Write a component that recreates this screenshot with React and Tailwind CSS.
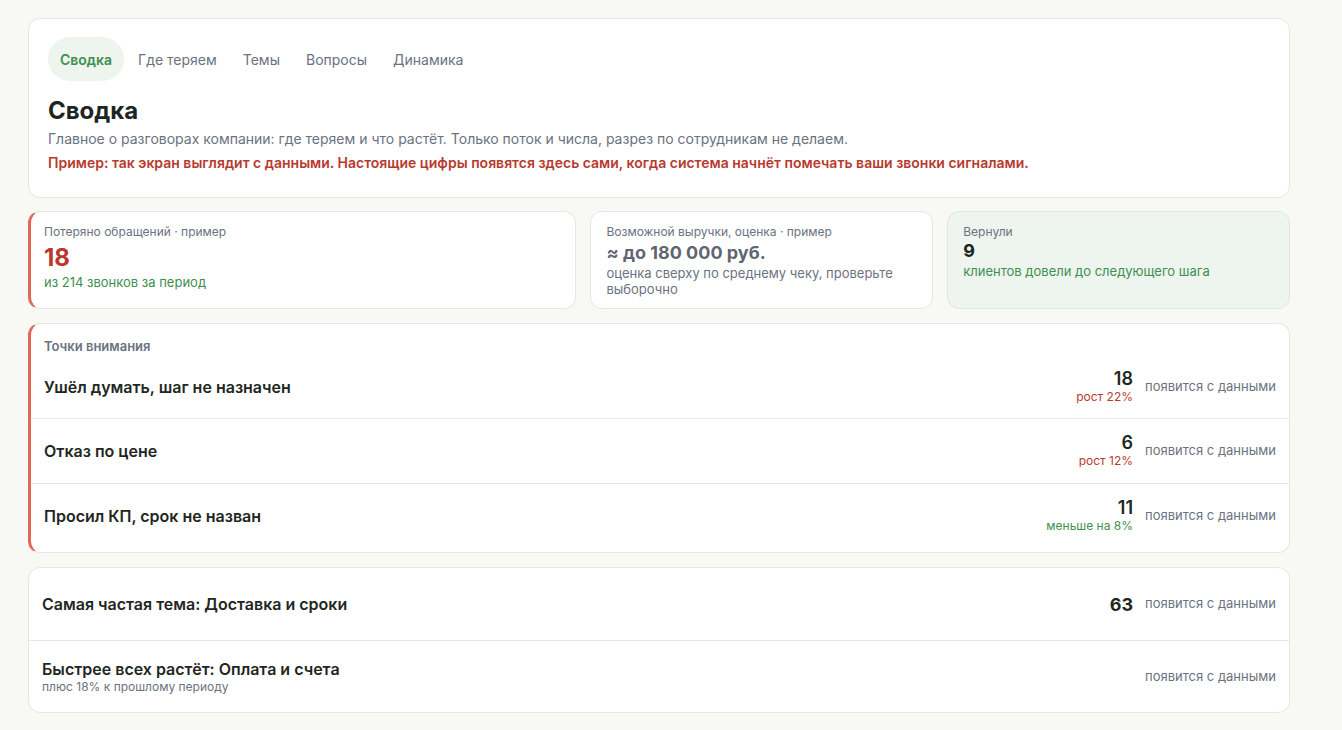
const tabs = ["Сводка", "Где теряем", "Темы", "Вопросы", "Динамика"];

const attention = [
  { title: "Ушёл думать, шаг не назначен", count: 18, delta: "рост 22%", up: true },
  { title: "Отказ по цене", count: 6, delta: "рост 12%", up: true },
  { title: "Просил КП, срок не назван", count: 11, delta: "меньше на 8%", up: false },
];

function Pending() {
  return <span className="text-[13px] text-[#6b7280] whitespace-nowrap">появится с данными</span>;
}

export default function App() {
  return (
    <div
      className="min-h-screen bg-[#f8f8f5] pt-[18px] pb-5 pl-7 text-[#1f2723]"
      style={{ fontFamily: "Inter, 'Noto Sans', sans-serif" }}
    >
      <div className="w-[1262px] flex flex-col gap-3.5">
        {/* Header card */}
        <div className="rounded-xl border border-[#e6e7e3] bg-white pl-[19px] pr-5 pt-[18px] pb-[24px]">
          <nav className="flex items-center gap-0.5">
            {tabs.map((t, i) => (
              <button
                key={t}
                type="button"
                className={
                  i === 0
                    ? "px-3 h-11 rounded-full bg-[#edf5ee] text-[14px] font-semibold text-[#3f8f4f]"
                    : "px-3 h-11 rounded-full text-[14px] text-[#6b7280]"
                }
              >
                {t}
              </button>
            ))}
          </nav>
          <h1 className="mt-3.5 text-[24px] leading-8 font-bold text-[#1c2520]">Сводка</h1>
          <p className="mt-0.5 text-[14px] leading-5 text-[#6b7280]">
            Главное о разговорах компании: где теряем и что растёт. Только поток и числа, разрез по сотрудникам не делаем.
          </p>
          <p className="mt-1 text-[14px] leading-5 font-semibold text-[#b83a2e]">
            Пример: так экран выглядит с данными. Настоящие цифры появятся здесь сами, когда система начнёт помечать ваши звонки сигналами.
          </p>
        </div>

        {/* Stat cards */}
        <div className="-mt-px grid grid-cols-[1.6fr_1fr_1fr] gap-3.5">
          <div className="rounded-xl border border-[#e6e7e3] border-l-[3px] border-l-[#e4665a] bg-white pl-[13px] pr-4 pt-3 pb-[11px]">
            <div className="text-[12px] leading-4 text-[#6b7280]">Потеряно обращений · пример</div>
            <div className="mt-1 text-[24px] leading-7 font-bold text-[#b83a2e]">18</div>
            <div className="mt-px text-[13px] leading-[18px] text-[#3f8f4f]">из 214 звонков за период</div>
          </div>
          <div className="rounded-xl border border-[#e6e7e3] bg-white px-[15px] pt-3 pb-[11px]">
            <div className="text-[12px] leading-4 text-[#6b7280]">Возможной выручки, оценка · пример</div>
            <div className="mt-0.5 text-[18px] leading-[22px] font-bold text-[#5f6672]">≈ до 180 000 руб.</div>
            <div className="mt-px text-[13px] leading-4 text-[#6b7280]">
              оценка сверху по среднему чеку, проверьте выборочно
            </div>
          </div>
          <div className="rounded-xl border border-[#dfe9e0] bg-[#edf5ee] px-[15px] pt-3 pb-[11px]">
            <div className="text-[12px] leading-4 text-[#6b7280]">Вернули</div>
            <div className="text-[18px] leading-[22px] font-bold text-[#1c2520]">9</div>
            <div className="text-[13px] leading-[18px] text-[#3f8f4f]">клиентов довели до следующего шага</div>
          </div>
        </div>

        {/* Attention points */}
        <div className="rounded-xl border border-[#e6e7e3] border-l-[3px] border-l-[#e4665a] bg-white pb-1">
          <div className="pl-[13px] pr-4 pt-[13px] text-[13px] leading-[18px] font-semibold text-[#6b7280]">
            Точки внимания
          </div>
          {attention.map((row, i) => (
            <div
              key={row.title}
              className={
                i === 0
                  ? "h-[63px] flex items-center justify-between pl-[13px] pr-[13px]"
                  : "h-[65px] flex items-center justify-between pl-[13px] pr-[13px] border-t border-[#e8e8e5]"
              }
            >
              <div className="text-[16px] font-semibold text-[#1f2723]">{row.title}</div>
              <div className="flex items-center gap-3">
                <div className="flex flex-col items-end">
                  <span className="text-[18px] leading-5 font-semibold text-[#1f2723]">{row.count}</span>
                  <span
                    className={
                      row.up
                        ? "text-[12px] leading-4 text-[#b83a2e]"
                        : "text-[12px] leading-4 text-[#3f8f4f]"
                    }
                  >
                    {row.delta}
                  </span>
                </div>
                <Pending />
              </div>
            </div>
          ))}
        </div>

        {/* Topics */}
        <div className="rounded-xl border border-[#e6e7e3] bg-white">
          <div className="h-[72px] flex items-center justify-between px-[13px]">
            <div className="text-[16px] font-semibold text-[#1f2723]">Самая частая тема: Доставка и сроки</div>
            <div className="flex items-center gap-3">
              <span className="text-[18px] font-bold text-[#1f2723]">63</span>
              <Pending />
            </div>
          </div>
          <div className="h-[72px] flex items-center justify-between px-[13px] border-t border-[#e8e8e5]">
            <div>
              <div className="text-[16px] leading-5 font-semibold text-[#1f2723]">Быстрее всех растёт: Оплата и счета</div>
              <div className="text-[12px] leading-4 text-[#6b7280]">плюс 18% к прошлому периоду</div>
            </div>
            <Pending />
          </div>
        </div>
      </div>
    </div>
  );
}
